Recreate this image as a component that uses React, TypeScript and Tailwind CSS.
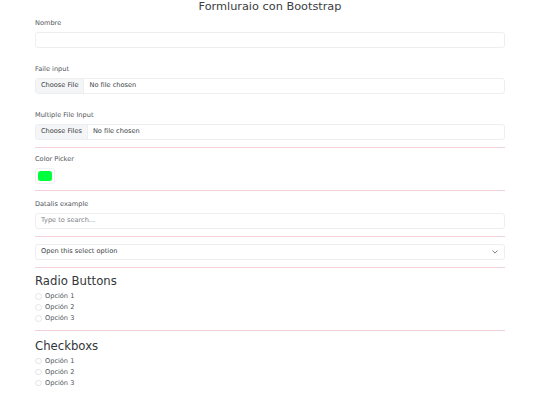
import React from "react";

const font = { fontFamily: '"DejaVu Sans", "Liberation Sans", sans-serif' };

function Label({ children, className = "" }: { children: React.ReactNode; className?: string }) {
  return (
    <div className={`h-[10px] text-[6.6px] leading-[10px] text-[#50555a] ${className}`}>{children}</div>
  );
}

function Hr({ className = "" }: { className?: string }) {
  return <div className={`h-px w-full bg-[#f2d2d6] ${className}`} />;
}

function FileInput({ btn, className = "" }: { btn: string; className?: string }) {
  return (
    <div className={`flex h-[16px] items-stretch overflow-hidden rounded-[3px] border border-[#eceef0] text-[6.6px] text-[#3a3e42] ${className}`}>
      <div className="flex items-center border-r border-[#eceef0] bg-[#f4f5f7] px-[5px]">{btn}</div>
      <div className="flex items-center pl-[5px]">No file chosen</div>
    </div>
  );
}

function Option({ text }: { text: string }) {
  return (
    <div className="flex h-[11px] items-center gap-[3.5px]">
      <div className="h-[6.5px] w-[6.5px] rounded-full border border-[#e3e5e8] bg-white" />
      <span className="text-[6.6px] leading-none text-[#50555a]">{text}</span>
    </div>
  );
}

export default function App() {
  return (
    <div className="min-h-[405px] w-full bg-white" style={font}>
      <div className="mx-auto w-[470px]">
        <div className="h-[14px] text-center text-[11.3px] leading-[14px] text-[#3a3d40]">
          Formluraio con Bootstrap
        </div>

        <Label className="mt-[4px]">Nombre</Label>
        <div className="mt-[3.5px] h-[16px] rounded-[3px] border border-[#eceef0]" />

        <Label className="mt-[16px]">Faile input</Label>
        <FileInput btn="Choose File" className="mt-[4px]" />

        <Label className="mt-[16px]">Multiple File Input</Label>
        <FileInput btn="Choose Files" className="mt-[4.5px]" />

        <Hr className="mt-[6.5px]" />

        <Label className="mt-[6px]">Color Picker</Label>
        <div className="mt-[4.6px] flex h-[16px] w-[20px] items-center justify-center rounded-[3px] border border-[#eff0f2]">
          <div className="h-[10.5px] w-[14px] rounded-[2.5px] bg-[#00ff3c]" />
        </div>

        <Hr className="mt-[6px]" />

        <Label className="mt-[7.5px]">Datalis example</Label>
        <div className="mt-[4px] flex h-[16px] items-center rounded-[3px] border border-[#eceef0] pl-[5px] text-[6.6px] text-[#7d8287]">
          Type to search...
        </div>

        <Hr className="mt-[7px]" />

        <div className="mt-[7px] flex h-[16px] items-center justify-between rounded-[3px] border border-[#eceef0] pl-[5px] pr-[6px] text-[6.6px] text-[#3a3e42]">
          <span>Open this select option</span>
          <svg width="6" height="4" viewBox="0 0 6 4" fill="none">
            <path d="M0.7 0.8 L3 3.1 L5.3 0.8" stroke="#5a5e62" strokeWidth="0.8" strokeLinecap="round" strokeLinejoin="round" />
          </svg>
        </div>

        <Hr className="mt-[7px]" />

        <div className="mt-[6.8px] h-[14px] text-[11.7px] leading-[14px] text-[#33363a]">Radio Buttons</div>
        <div className="mt-[2.5px] flex flex-col">
          <Option text="Opción 1" />
          <Option text="Opción 2" />
          <Option text="Opción 3" />
        </div>

        <Hr className="mt-[6.3px]" />

        <div className="mt-[7.5px] h-[14px] text-[11.7px] leading-[14px] text-[#33363a]">Checkboxs</div>
        <div className="mt-[2.9px] flex flex-col">
          <Option text="Opción 1" />
          <Option text="Opción 2" />
          <Option text="Opción 3" />
        </div>
      </div>
    </div>
  );
}
